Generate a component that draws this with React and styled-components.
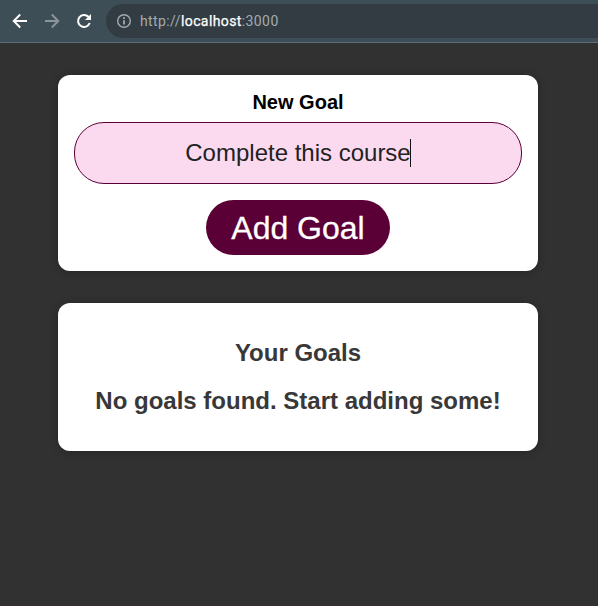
import React from "react";
import styled, { createGlobalStyle } from "styled-components";

const GlobalStyle = createGlobalStyle`
  * { box-sizing: border-box; }
  html, body { margin: 0; padding: 0; background: #313131; }
  body { font-family: "Liberation Sans", Arial, Helvetica, sans-serif; overflow: hidden; }
`;

const Window = styled.div`
  display: flex;
  flex-direction: column;
  height: 100vh;
  border-bottom: 1px solid #392c31;
`;

const BrowserBar = styled.header`
  display: flex;
  align-items: flex-start;
  flex: none;
  height: 43px;
  padding: 4px 0 0 12px;
  background: #3e4e56;
  border-bottom: 1px solid #5d7077;
`;

const NavButtons = styled.nav`
  display: flex;
  gap: 16px;
  padding-top: 9px;
`;

const NavButton = styled.button`
  display: flex;
  width: 16px;
  height: 16px;
  padding: 0;
  border: 0;
  background: none;
  color: ${(p) => (p.$muted ? "#8b959b" : "#ffffff")};
`;

const AddressBar = styled.div`
  display: flex;
  align-items: center;
  flex: 1;
  height: 34px;
  margin-left: 14px;
  padding-left: 10px;
  gap: 8px;
  border-radius: 17px 0 0 17px;
  background: #323c42;
  color: #a3abaf;
`;

const Url = styled.span`
  font: 400 14px/20px Roboto, sans-serif;
  letter-spacing: 0.4px;
`;

const Host = styled.span`
  color: #ffffff;
  -webkit-text-stroke: 0.25px #ffffff;
`;

const Main = styled.main`
  display: flex;
  flex-direction: column;
  gap: 32px;
  width: 480px;
  margin: 32px 0 0 58px;
`;

const Card = styled.section`
  height: ${(p) => p.$height}px;
  border-radius: 12px;
  background: #ffffff;
  box-shadow: 0 1px 8px rgba(0, 0, 0, 0.25);
  text-align: center;
`;

const GoalForm = styled(Card)`
  display: flex;
  flex-direction: column;
  align-items: center;
  padding: 16px;
`;

const Label = styled.label`
  margin-bottom: 8px;
  font-size: 20px;
  line-height: 23px;
  font-weight: 700;
  color: #000000;
`;

const GoalField = styled.div`
  display: flex;
  align-items: center;
  justify-content: center;
  flex: none;
  width: 448px;
  height: 62px;
  border: 1px solid #5b0036;
  border-radius: 30px;
  background: #fbdaef;
  color: #222222;
  font-size: 24px;
  line-height: 28px;
`;

const Caret = styled.span`
  width: 1px;
  height: 28px;
  margin: 0 0 0 -1px;
  background: #111111;
`;

const AddButton = styled.button`
  flex: none;
  width: 184px;
  height: 55px;
  margin-top: 16px;
  padding: 1px 0 0;
  border: 0;
  border-radius: 28px;
  background: #5b0036;
  color: #ffffff;
  font: 400 32px/54px "Liberation Sans", Arial, sans-serif;
  -webkit-text-stroke: 0.3px #ffffff;
`;

const GoalList = styled(Card)`
  padding-top: 36px;
`;

const Heading = styled.h2`
  margin: 0 0 20px;
  font-size: 24px;
  line-height: 28px;
  color: #383838;
`;

function BackIcon() {
  return (
    <svg width="16" height="16" viewBox="0 0 16 16" fill="none" stroke="currentColor" strokeWidth="1.9">
      <path d="M15 8H2.2M8.2 1.5 1.7 8l6.5 6.5" />
    </svg>
  );
}

function ForwardIcon() {
  return (
    <svg width="16" height="16" viewBox="0 0 16 16" fill="none" stroke="currentColor" strokeWidth="1.9">
      <path d="M1 8h12.8M7.8 1.5 14.3 8l-6.5 6.5" />
    </svg>
  );
}

function ReloadIcon() {
  return (
    <svg width="16" height="16" viewBox="0 0 16 16" fill="none" stroke="currentColor" strokeWidth="2">
      <path d="M13.7 10A6 6 0 1 1 12.4 3.8L14 5.4" />
      <path d="M15 1v6H9z" fill="currentColor" stroke="none" />
    </svg>
  );
}

function InfoIcon() {
  return (
    <svg width="16" height="16" viewBox="0 0 16 16" fill="none" stroke="currentColor">
      <circle cx="8" cy="8" r="6.3" strokeWidth="1.4" />
      <path d="M8 7.2v4.3M8 4.3v1.8" strokeWidth="1.8" />
    </svg>
  );
}

export default function App() {
  return (
    <>
      <GlobalStyle />
      <Window>
        <BrowserBar>
          <NavButtons>
            <NavButton aria-label="Back"><BackIcon /></NavButton>
            <NavButton aria-label="Forward" $muted><ForwardIcon /></NavButton>
            <NavButton aria-label="Reload"><ReloadIcon /></NavButton>
          </NavButtons>
          <AddressBar>
            <InfoIcon />
            <Url>http://<Host>localhost</Host>:3000</Url>
          </AddressBar>
        </BrowserBar>
        <Main>
          <GoalForm $height={196}>
            <Label>New Goal</Label>
            <GoalField>Complete this course<Caret /></GoalField>
            <AddButton>Add Goal</AddButton>
          </GoalForm>
          <GoalList $height={148}>
            <Heading>Your Goals</Heading>
            <Heading>No goals found. Start adding some!</Heading>
          </GoalList>
        </Main>
      </Window>
    </>
  );
}
